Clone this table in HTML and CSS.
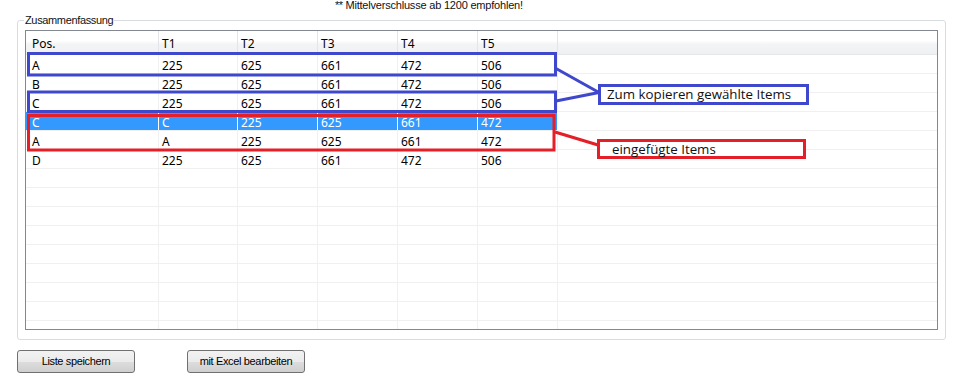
FILE: index.html
```html
<!DOCTYPE html>
<html lang="de">
<head>
<meta charset="utf-8">
<title>Zusammenfassung</title>
<link rel="stylesheet" href="styles.css">
</head>
<body>
<div class="note"><span class="stars">**</span> Mittelverschlusse ab 1200 empfohlen!</div>

<fieldset class="group">
  <legend>Zusammenfassung</legend>
  <div class="lv">
    <div class="hdr">
      <div class="c c1">Pos.</div>
      <div class="c">T1</div>
      <div class="c">T2</div>
      <div class="c">T3</div>
      <div class="c">T4</div>
      <div class="c">T5</div>
      <div class="fill"></div>
    </div>
    <div class="body">
      <div class="row"><div class="c c1">A</div><div class="c">225</div><div class="c">625</div><div class="c">661</div><div class="c">472</div><div class="c">506</div><div class="fill"></div></div>
      <div class="row"><div class="c c1">B</div><div class="c">225</div><div class="c">625</div><div class="c">661</div><div class="c">472</div><div class="c">506</div><div class="fill"></div></div>
      <div class="row"><div class="c c1">C</div><div class="c">225</div><div class="c">625</div><div class="c">661</div><div class="c">472</div><div class="c">506</div><div class="fill"></div></div>
      <div class="row sel"><div class="c c1">C</div><div class="c">C</div><div class="c">225</div><div class="c">625</div><div class="c">661</div><div class="c">472</div><div class="fill"></div></div>
      <div class="row"><div class="c c1">A</div><div class="c">A</div><div class="c">225</div><div class="c">625</div><div class="c">661</div><div class="c">472</div><div class="fill"></div></div>
      <div class="row"><div class="c c1">D</div><div class="c">225</div><div class="c">625</div><div class="c">661</div><div class="c">472</div><div class="c">506</div><div class="fill"></div></div>
      <div class="row"><div class="c c1"></div><div class="c"></div><div class="c"></div><div class="c"></div><div class="c"></div><div class="c"></div><div class="fill"></div></div>
      <div class="row"><div class="c c1"></div><div class="c"></div><div class="c"></div><div class="c"></div><div class="c"></div><div class="c"></div><div class="fill"></div></div>
      <div class="row"><div class="c c1"></div><div class="c"></div><div class="c"></div><div class="c"></div><div class="c"></div><div class="c"></div><div class="fill"></div></div>
      <div class="row"><div class="c c1"></div><div class="c"></div><div class="c"></div><div class="c"></div><div class="c"></div><div class="c"></div><div class="fill"></div></div>
      <div class="row"><div class="c c1"></div><div class="c"></div><div class="c"></div><div class="c"></div><div class="c"></div><div class="c"></div><div class="fill"></div></div>
      <div class="row"><div class="c c1"></div><div class="c"></div><div class="c"></div><div class="c"></div><div class="c"></div><div class="c"></div><div class="fill"></div></div>
      <div class="row"><div class="c c1"></div><div class="c"></div><div class="c"></div><div class="c"></div><div class="c"></div><div class="c"></div><div class="fill"></div></div>
      <div class="row"><div class="c c1"></div><div class="c"></div><div class="c"></div><div class="c"></div><div class="c"></div><div class="c"></div><div class="fill"></div></div>
      <div class="row"><div class="c c1"></div><div class="c"></div><div class="c"></div><div class="c"></div><div class="c"></div><div class="c"></div><div class="fill"></div></div>
    </div>
  </div>
</fieldset>

<div class="buttons">
  <button class="btn">Liste speichern</button>
  <button class="btn">mit Excel bearbeiten</button>
</div>

<svg class="marks" width="957" height="386" viewBox="0 0 957 386" xmlns="http://www.w3.org/2000/svg">
  <g fill="none" stroke="#3f48cc" stroke-width="3">
    <rect x="28.5" y="53.5" width="527" height="21.5"/>
    <rect x="28.5" y="92" width="527" height="19.5"/>
    <line x1="556" y1="68.5" x2="599" y2="92.5"/>
    <line x1="556" y1="101" x2="599" y2="92.5"/>
  </g>
  <g fill="none" stroke="#e41f27" stroke-width="3">
    <rect x="28.5" y="115.5" width="525.5" height="34.5"/>
    <line x1="555" y1="132" x2="598" y2="145"/>
  </g>
</svg>
<div class="label label-blue">Zum kopieren gewählte Items</div>
<div class="label label-red">eingefügte Items</div>
</body>
</html>
```
FILE: styles.css
```css
html, body {
  margin: 0;
  padding: 0;
  background: #ffffff;
}
body {
  width: 957px;
  height: 386px;
  overflow: hidden;
  position: relative;
  font-family: "Liberation Sans", Arial, sans-serif;
  color: #000;
}

.note {
  height: 10px;
  line-height: 10px;
  font-size: 11px;
  letter-spacing: -0.2px;
  padding-left: 335px;
  white-space: nowrap;
  color: #111;
}
.stars {
  letter-spacing: -0.5px;
}

.group {
  margin: 4px 11px 0 17px;
  padding: 4px 7px 9px 7px;
  border: 1px solid #d9dde1;
  border-radius: 3px;
  min-width: 0;
}
.group legend {
  padding: 0 1px;
  margin-left: -1px;
  font-size: 11px;
  line-height: 12px;
  letter-spacing: -0.35px;
  color: #111;
}

.lv {
  box-sizing: border-box;
  height: 300px;
  border: 1px solid #828790;
  overflow: hidden;
  font-family: "Noto Sans", "Open Sans", sans-serif;
  font-size: 12px;
  background: #fff;
}

.hdr {
  display: flex;
  box-sizing: border-box;
  height: 24px;
  line-height: 22px;
  background: linear-gradient(#ffffff 0%, #ffffff 42%, #f3f4f6 58%, #eff0f2 100%);
  border-bottom: 1px solid #e6e7e9;
}
.hdr .c {
  border-right: 1px solid #e3e5e8;
  padding-top: 2px;
}

.c {
  box-sizing: border-box;
  width: 80px;
  flex: none;
  padding-left: 3px;
  white-space: nowrap;
}
.c.c1 {
  width: 133px;
  padding-left: 6px;
}
.hdr .c:nth-child(2) { width: 79px; }
.row .c:nth-child(2) { width: 79px; }
.fill {
  flex: 1;
}

.body {
  height: 274px;
  overflow: hidden;
}
.row {
  display: flex;
  box-sizing: border-box;
  height: 19px;
  line-height: 18px;
  border-bottom: 1px solid #f0f0f0;
}
.row .c {
  border-right: 1px solid #f0f0f0;
  padding-top: 2px;
}
.row.sel .c {
  background: #3399ff;
  color: #fff;
  border-right-color: #ffffff;
}

.buttons {
  display: flex;
  gap: 52px;
  padding: 10px 0 0 17px;
}
.btn {
  box-sizing: border-box;
  width: 118px;
  height: 23px;
  margin: 0;
  padding: 0;
  border: 1px solid #707070;
  border-radius: 3px;
  background: linear-gradient(#f2f2f2 0%, #ebebeb 50%, #dddddd 51%, #cfcfcf 100%);
  font-family: "Liberation Sans", Arial, sans-serif;
  font-size: 11px;
  letter-spacing: -0.35px;
  color: #000;
  line-height: 21px;
}

.marks {
  position: absolute;
  left: 0;
  top: 0;
  pointer-events: none;
}

.label {
  position: absolute;
  box-sizing: border-box;
  background: #fff;
  font-family: "Open Sans", "Noto Sans", sans-serif;
  font-size: 13.3px;
  color: #111;
  white-space: nowrap;
}
.label-blue {
  left: 598px;
  top: 84px;
  width: 211px;
  height: 21px;
  border: 3px solid #3f48cc;
  padding-left: 6px;
  line-height: 14px;
}
.label-red {
  left: 597px;
  top: 139px;
  width: 209px;
  height: 20px;
  border: 3px solid #e41f27;
  padding-left: 12px;
  line-height: 14px;
}
```
